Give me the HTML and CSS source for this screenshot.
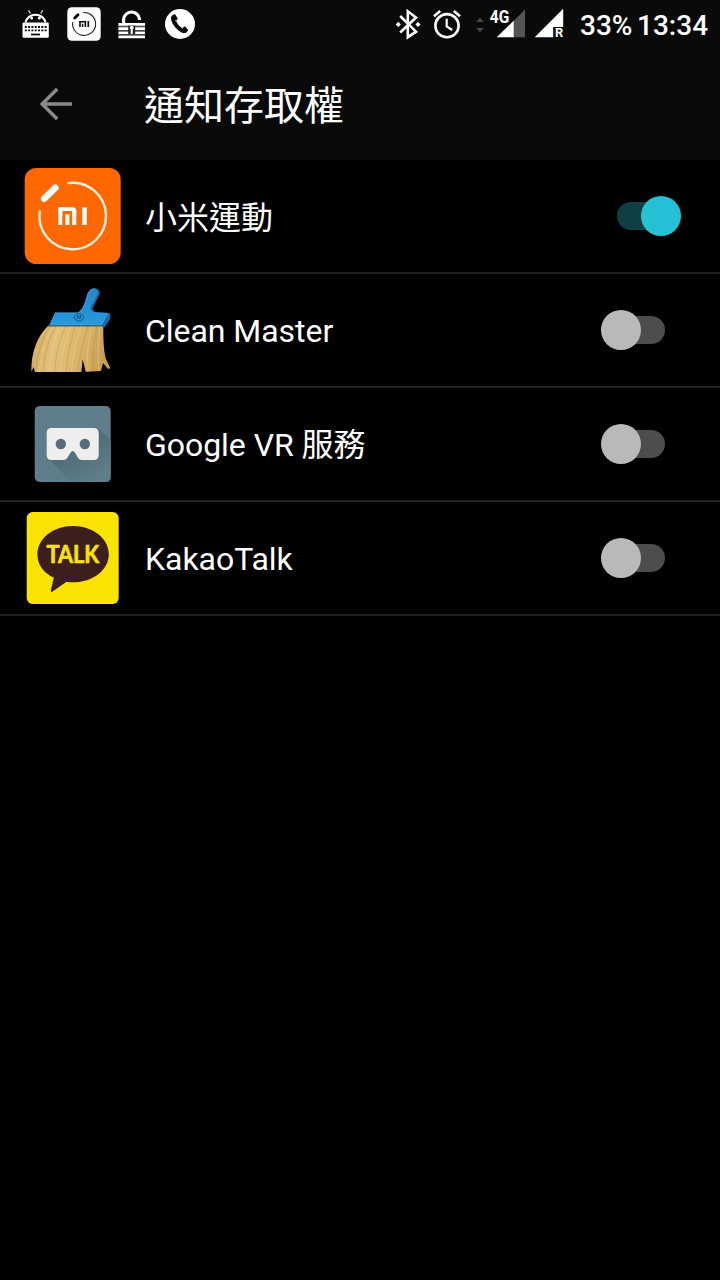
FILE: index.html
```html
<!DOCTYPE html>
<html lang="zh-Hant">
<head>
<meta charset="utf-8">
<title>通知存取權</title>
<link rel="stylesheet" href="styles.css">
</head>
<body>
<div class="status-bar">
  <div class="status-left">
    <svg class="st" width="28" height="48" viewBox="22 0 28 48">
      <path d="M25.5 22.4A10.2 9.6 0 0 1 45.5 22.4" fill="none" stroke="#fff" stroke-width="2"/>
      <path d="M30.4 13.5 28.6 10.3M40.8 13.5 42.6 10.3" stroke="#ddd" stroke-width="1.3"/>
      <circle cx="31.6" cy="18" r="1.5" fill="#fff"/><circle cx="39.4" cy="18" r="1.5" fill="#fff"/>
      <rect x="22.5" y="22.6" width="26.3" height="15.2" rx="1.3" fill="#fff"/>
      <path d="M24.8 27H46.7M24.8 30.4H46.7" stroke="#111" stroke-width="1.9" stroke-dasharray="2 1.3"/>
      <path d="M31 34.5H40" stroke="#111" stroke-width="1.8"/>
    </svg>
    <svg class="st" width="34" height="48" viewBox="67 0 34 48">
      <rect x="67.3" y="7.3" width="33.4" height="33.4" rx="4.5" fill="#fff"/>
      <path d="M83.2 12.5A11.5 11.5 0 1 1 72.8 22" fill="none" stroke="#222" stroke-width="1.1"/>
      <path d="M74.7 18 78 14.7" stroke="#0a0a0a" stroke-width="2.9" stroke-linecap="round"/>
      <g fill="#0a0a0a"><rect x="79.2" y="21" width="7" height="1.6" rx=".5"/><rect x="79.2" y="21" width="1.6" height="6"/><rect x="81.9" y="23.7" width="1.4" height="3.3"/><rect x="84.6" y="21.6" width="1.6" height="5.4"/><rect x="87.5" y="21" width="1.7" height="6"/></g>
    </svg>
    <svg class="st" width="28" height="48" viewBox="118 0 28 48">
      <path d="M123.6 23V19.3A8 8 0 0 1 139.5 19V20" fill="none" stroke="#fff" stroke-width="3.1"/>
      <path d="M118.4 24.3H145M118.4 28.6H145M118.4 32.8H145M118.4 36.9H145" stroke="#fff" stroke-width="2.7"/>
      <path d="M118.4 26.5H145M118.4 30.7H145" stroke="#888" stroke-width=".6"/>
      <rect x="128.2" y="25.7" width="7" height="8.5" fill="#222"/>
      <path d="M131.7 26V34M129.9 27.6H133.6" stroke="#fff" stroke-width="2.1"/>
    </svg>
    <svg class="st" width="30" height="48" viewBox="165 0 30 48">
      <circle cx="180" cy="24" r="15" fill="#fff"/>
      <path d="M172.2 15.6 174.9 14 178.2 19.2 176.1 21.2Q178 25.7 181.8 28L184.8 26 188.3 30.2 185.7 32.9Q182.5 34 177.3 29.5 171.5 24 170.9 18.3 170.9 16.5 172.2 15.6Z" fill="#0a0a0a"/>
      <path d="M175.2 20.9 178.9 18.5M181.9 28.8 185.1 25.6" stroke="#fff" stroke-width=".7"/>
    </svg>
  </div>
  <div class="status-right">
    <svg class="st" width="90" height="48" viewBox="395 0 90 48">
      <path d="M400.2 16 416 31.7 407.8 37.2V11.3L416 17.5 400.2 32.5" fill="none" stroke="#fff" stroke-width="2.6"/>
      <path d="M395.7 24.4 398.3 21.8 400.9 24.4 398.3 27ZM415.4 24.4 418 21.8 420.6 24.4 418 27Z" fill="#fff"/>
      <circle cx="447" cy="25.7" r="11.6" fill="none" stroke="#fff" stroke-width="2.6"/>
      <path d="M446.7 18.7V26.4L452.2 30" fill="none" stroke="#fff" stroke-width="2.2"/>
      <path d="M434 16.2 440.2 11M460 16.2 453.8 11" stroke="#fff" stroke-width="2.7"/>
      <path d="M476.2 22 480 17.8 483.8 22ZM476.2 28 480 32.2 483.8 28Z" fill="#484848"/>
    </svg>
    <svg class="st" width="76" height="48" viewBox="489 0 76 48">
      <path d="M525 9.4V37.2H513V21.4Z" fill="#555"/>
      <path d="M496.7 37.2H513.7V20.7Z" fill="#fff"/>
      <text class="network" x="489.8" y="22.8" textLength="19.5" lengthAdjust="spacingAndGlyphs">4G</text>
      <path d="M534.7 37.2H553.2V27H563.2V8.8Z" fill="#fff"/>
      <text class="roaming" x="555" y="37.4" textLength="8.2" lengthAdjust="spacingAndGlyphs">R</text>
    </svg>
    <span class="battery">33%</span>
    <span class="clock">13:34</span>
  </div>
</div>
<header class="app-bar">
  <svg class="back" width="32" height="34" viewBox="40 87 32 34"><path d="M72 104H43M57.2 89 42.2 104 57.2 119" fill="none" stroke="#8b8b8b" stroke-width="3.5"/></svg>
  <h1 class="title">通知存取權</h1>
</header>
<main class="list">
  <div class="row">
    <svg class="icon" viewBox="0 160 145 112">
      <rect x="24.7" y="168" width="96" height="96" rx="11.5" fill="#ff6700"/>
      <path d="M68.5 183A33.3 33.3 0 1 1 39.7 211.4" fill="none" stroke="#fff2df" stroke-width="2.4" stroke-linecap="round"/>
      <path d="M44.2 198.7 55.3 187.8" stroke="#fff" stroke-width="6.6" stroke-linecap="round"/>
      <g fill="#fff"><rect x="58.3" y="207.3" width="18" height="9" rx="3.6"/><rect x="58.3" y="207.3" width="4.2" height="17.7"/><rect x="72.1" y="211" width="4.2" height="14"/></g>
      <rect x="62.5" y="211" width="9.6" height="14" fill="#ff6700"/>
      <g fill="#fff"><rect x="65.4" y="214.2" width="4" height="10.8"/><rect x="82.2" y="207.3" width="4.6" height="17.7"/></g>
    </svg>
    <span class="label cjk">小米運動</span>
    <span class="switch on"></span>
  </div>
  <div class="row">
    <svg class="icon" viewBox="0 274 145 112">
      <defs>
        <linearGradient id="straw" x2="1" y2=".15"><stop offset="0" stop-color="#cda75e"/><stop offset=".35" stop-color="#e3c17a"/><stop offset=".65" stop-color="#dcb76b"/><stop offset="1" stop-color="#c79d53"/></linearGradient>
        <linearGradient id="blue" x2="0" y2="1"><stop offset="0" stop-color="#2784c7"/><stop offset="1" stop-color="#289add"/></linearGradient>
        <clipPath id="bristles"><path d="M86 136H250Q249 205 257 235L271 265 264 267 249 249 243 273 197 275 188 238 184 276H45L41 261 34 275Q33 187 86 136Z"/></clipPath>
      </defs>
      <g transform="translate(20 280) scale(.33333)">
        <g clip-path="url(#bristles)">
          <rect x="30" y="130" width="245" height="150" fill="url(#straw)"/>
          <path d="M95 132Q55 185 47 280M112 132Q75 190 70 280M140 132Q108 195 104 280M169 132Q144 200 137 280M205 132Q182 210 172 280M232 132Q216 200 219 280" fill="none" stroke="#a77c37" stroke-width="2.5" opacity=".4"/>
          <path d="M104 132Q63 190 57 280M126 132Q91 190 87 280M155 132Q126 200 120 280M185 132Q161 200 154 280M218 132Q196 200 205 280M242 132Q231 200 236 280" fill="none" stroke="#f1d38c" stroke-width="3" opacity=".5"/>
          <path d="M80 138H252" stroke="#765020" stroke-width="6" opacity=".5"/>
        </g>
        <path d="M174 98Q191 85 196 62L203 39Q211 24 224 24 240 27 239 41L218 85Q218 95 232 97L268 99Q274 104 269 120L252 144 247 137H88L105 98Z" fill="#166ba8"/>
        <path d="M174 98Q190 86 196 65L204 39Q212 27 222 26 235 29 234 40L211 82Q209 94 224 97L264 99 246 134H88L105 98Z" fill="url(#blue)"/>
        <path d="M105 99H176Q191 88 197 65L205 38Q213 27 223 28M91 133H245L262 103" fill="none" stroke="#46a9e4" stroke-width="2"/>
        <ellipse cx="177" cy="112" rx="14" ry="11" fill="none" stroke="#12568f" stroke-width="3"/>
        <text class="broom-mark" x="177" y="118" text-anchor="middle">M</text>
      </g>
    </svg>
    <span class="label">Clean Master</span>
    <span class="switch"></span>
  </div>
  <div class="row">
    <svg class="icon" viewBox="0 388 145 112">
      <defs><linearGradient id="shade" x1="0" x2=".65" y2="1"><stop offset="0" stop-color="#455e69"/><stop offset="1" stop-color="#607d8b"/></linearGradient></defs>
      <rect x="34.7" y="406" width="76" height="76" rx="5" fill="#607d8b"/>
      <path d="M48 458.4 71.5 482H106Q110.7 482 110.7 477V440L98 428.4Z" fill="url(#shade)"/>
      <path d="M51.7 428H93.7Q98.7 428 98.7 433V455Q98.7 460 93.7 460H81.8Q79.5 460 78.2 458L74.8 452.5Q72.7 449.5 70.6 452.5L67.3 458Q66 460 63.7 460H51.7Q46.7 460 46.7 455V433Q46.7 428 51.7 428Z" fill="#eee"/>
      <circle cx="60.8" cy="444" r="5.2" fill="#546e7a"/><circle cx="84.8" cy="444" r="5.2" fill="#546e7a"/>
    </svg>
    <span class="label">Google VR 服務</span>
    <span class="switch"></span>
  </div>
  <div class="row">
    <svg class="icon" viewBox="0 502 145 112">
      <rect x="26.7" y="512" width="92" height="92" rx="6" fill="#fae300"/>
      <path d="M73 526C93 526 108.8 538.5 108.8 554.2S93 582.3 73 582.3Q69.5 582.3 66.5 581.8L52.3 591.8Q50.6 592.4 50.8 590.3L53.8 577.8Q37.4 569.5 37.4 554.2C37.4 538.5 53 526 73 526Z" fill="#3c1e1e"/>
      <text class="talk" x="46.6" y="563" textLength="52.6" lengthAdjust="spacingAndGlyphs">TALK</text>
    </svg>
    <span class="label">KakaoTalk</span>
    <span class="switch"></span>
  </div>
</main>
</body>
</html>
```
FILE: styles.css
```css
* { box-sizing: border-box; }
body {
  margin: 0;
  min-height: 1280px;
  background: #000;
  color: #fff;
  font-family: Roboto, "Noto Sans CJK TC", sans-serif;
}
svg { display: block; flex: none; }
.status-bar {
  display: flex;
  justify-content: space-between;
  height: 48px;
  padding: 0 12px 0 22px;
  background: #0a0a0a;
}
.status-left { display: flex; gap: 17px; }
.status-left .st:nth-child(4) { margin-left: 2px; }
.status-right { display: flex; align-items: center; font-size: 28px; font-weight: 500; line-height: 48px; white-space: nowrap; }
.status-right .st + .st { margin-left: 4px; }
.battery { width: 57px; margin-left: 15px; padding-top: 3px; }
.clock { width: 71px; padding-top: 3px; }
.network { fill: #fff; font: 700 18px Roboto, sans-serif; }
.roaming { fill: #fff; font: 700 12px Roboto, sans-serif; }
.app-bar {
  display: flex;
  align-items: center;
  height: 112px;
  padding-left: 40px;
  background: #0a0a0a;
}
.title { margin: 0 0 0 72px; padding-top: 5px; font-size: 40px; font-weight: 400; line-height: 60px; }
.row {
  display: flex;
  align-items: center;
  height: 114px;
  padding-right: 39px;
  border-bottom: 2px solid #212121;
}
.icon { width: 145px; height: 112px; }
.label { flex: 1; font-size: 32px; line-height: 48px; padding-top: 2px; letter-spacing: -.04px; }
.label.cjk { padding-top: 4px; }
.switch {
  display: flex;
  align-items: center;
  width: 64px;
  height: 28px;
  margin-right: 16px;
  background: linear-gradient(90deg, transparent 16px, #4d4d4d 16px);
  border-radius: 14px;
}
.switch::before {
  content: "";
  flex: none;
  width: 40px;
  height: 40px;
  border-radius: 50%;
  background: #b9b9b9;
}
.switch.on {
  justify-content: flex-end;
  margin-right: 0;
  background: #0d3f45;
}
.switch.on::before { background: #26c1d6; }
.broom-mark { fill: #12568f; font: 700 16px Roboto, sans-serif; }
.talk { fill: #fae300; stroke: #fae300; stroke-width: .7; stroke-linejoin: round; font: 700 24px Lato, sans-serif; }
```
